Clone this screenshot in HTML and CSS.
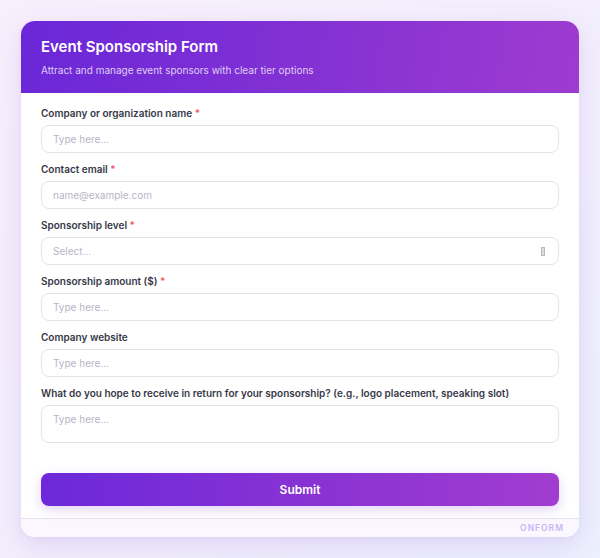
FILE: index.html
```html
<!DOCTYPE html>
<html lang="en">
<head>
<meta charset="utf-8">
<title>Event Sponsorship Form</title>
<link rel="stylesheet" href="styles.css">
</head>
<body>
<div class="card">
  <header class="head">
    <h1 class="title">Event Sponsorship Form</h1>
    <p class="sub">Attract and manage event sponsors with clear tier options</p>
  </header>
  <form class="body">
    <div class="field">
      <label class="label">Company or organization name <span class="req">*</span></label>
      <div class="input"><span class="ph">Type here...</span></div>
    </div>
    <div class="field">
      <label class="label">Contact email <span class="req">*</span></label>
      <div class="input"><span class="ph">name@example.com</span></div>
    </div>
    <div class="field">
      <label class="label">Sponsorship level <span class="req">*</span></label>
      <div class="input select"><span class="ph">Select...</span><span class="tofu"></span></div>
    </div>
    <div class="field">
      <label class="label">Sponsorship amount ($) <span class="req">*</span></label>
      <div class="input"><span class="ph">Type here...</span></div>
    </div>
    <div class="field">
      <label class="label">Company website</label>
      <div class="input"><span class="ph">Type here...</span></div>
    </div>
    <div class="field">
      <label class="label">What do you hope to receive in return for your sponsorship? (e.g., logo placement, speaking slot)</label>
      <div class="input area"><span class="ph">Type here...</span></div>
    </div>
    <button type="button" class="submit">Submit</button>
  </form>
  <footer class="foot">ONFORM</footer>
</div>
</body>
</html>
```
FILE: styles.css
```css
* { box-sizing: border-box; }
html, body { margin: 0; padding: 0; }
body {
  width: 600px;
  height: 558px;
  padding: 21px;
  font-family: Inter, "Noto Sans", sans-serif;
  background: linear-gradient(135deg, #f8effc 0%, #f3effc 50%, #edf0fe 100%);
  overflow: hidden;
}
.card {
  width: 558px;
  background: #fff;
  border-radius: 14px;
  overflow: hidden;
  box-shadow: 0 10px 30px rgba(140, 90, 220, 0.16), 0 2px 6px rgba(140, 90, 220, 0.06);
}
.head {
  padding: 16px 20px 15px;
  background: linear-gradient(100deg, #6a27d8 0%, #8532d3 55%, #9e3bd0 100%);
  color: #fff;
}
.title {
  margin: 0;
  font-size: 15px;
  line-height: 20px;
  font-weight: 600;
}
.sub {
  margin: 6px 0 0;
  font-size: 10px;
  line-height: 15px;
  color: rgba(255, 255, 255, 0.78);
}
.body {
  margin: 0;
  padding: 13px 20px 12px;
  display: flex;
  flex-direction: column;
  gap: 9px;
}
.field {
  display: flex;
  flex-direction: column;
  gap: 5px;
}
.label {
  font-size: 10px;
  line-height: 14px;
  font-weight: 600;
  color: #363848;
}
.req { color: #f05a6a; }
.input {
  height: 28px;
  border: 1.5px solid #e3e2ea;
  border-radius: 8px;
  padding: 0 11px;
  display: flex;
  align-items: center;
  font-size: 10px;
  background: #fff;
}
.ph { color: #b7b5c3; }
.select { justify-content: space-between; }
.tofu {
  width: 4px;
  height: 9px;
  border: 1px solid #b9b9c2;
  background: #dcdce2;
  margin-right: 2px;
}
.area {
  height: 38px;
  align-items: flex-start;
  padding-top: 7px;
}
.submit {
  margin-top: 21px;
  height: 33px;
  border: 0;
  border-radius: 8px;
  background: linear-gradient(90deg, #6c28d9 0%, #8a33d3 55%, #a23cd0 100%);
  color: #fff;
  font-family: inherit;
  font-size: 12px;
  font-weight: 600;
  box-shadow: 0 4px 12px rgba(130, 60, 215, 0.22);
}
.foot {
  height: 19px;
  border-top: 1px solid #e6e3ef;
  background: #faf8fe;
  text-align: right;
  padding: 3px 15px 0;
  font-size: 8.5px;
  line-height: 12px;
  font-weight: 600;
  letter-spacing: 1px;
  color: #c5b7f6;
}
```
